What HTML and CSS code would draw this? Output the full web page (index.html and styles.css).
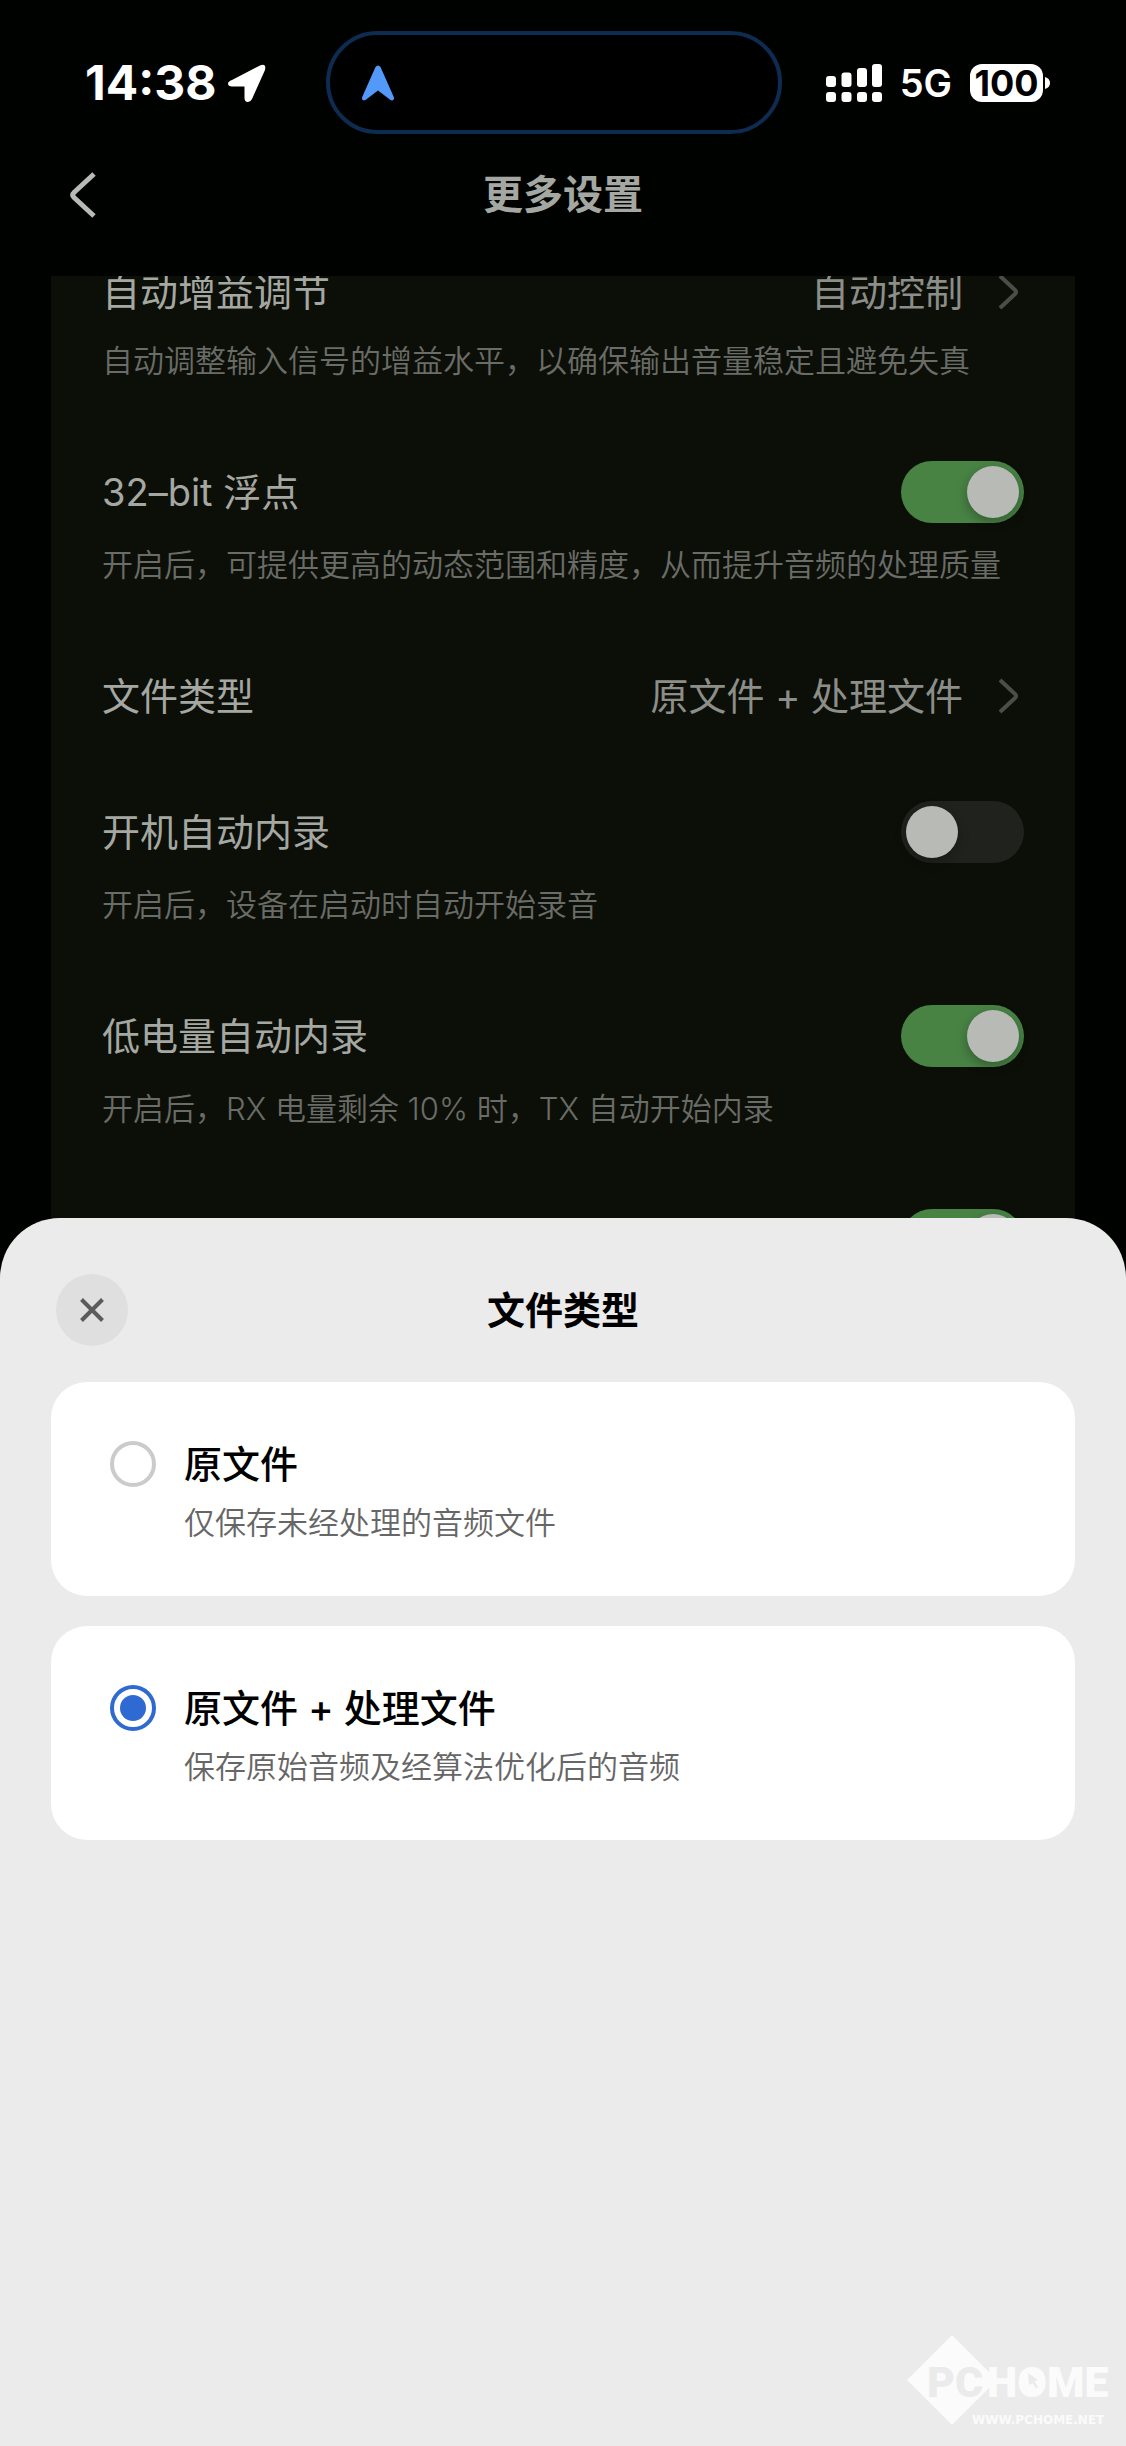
FILE: index.html
```html
<!DOCTYPE html>
<html lang="zh-CN">
<head>
    <meta charset="UTF-8">
    <meta name="viewport" content="width=device-width, initial-scale=1.0">
    <title>更多设置</title>
    <link rel="stylesheet" href="styles.css">
</head>
<body>
    <!-- Status bar -->
    <div class="status-bar">
        <span class="time">14:38</span>
        <svg class="location-icon" viewBox="0 0 38 38">
            <path d="M4 16 L32 1.500 Q38.500 -1 37 6 L24 35 Q22.500 38 20 38 Q16.500 38 16.500 34 L16.500 22.500 L4 22.500 Q0 22.500 0 19.500 Q0 17.500 4 16 Z"></path>
        </svg>
        <div class="island">
            <svg class="nav-icon" viewBox="0 0 32 36">
                <path d="M13.500 2 Q16 -1 18.500 2 L32 32.500 Q32 36.500 28.500 35 L16 25.500 L3.500 35 Q0 36.500 0 32.500 Z"></path>
            </svg>
        </div>
        <div class="status-right">
            <svg class="signal-icon" viewBox="0 0 56 38">
                <rect x="0" y="12" width="10" height="11" rx="3"></rect>
                <rect x="15.500" y="8.500" width="10" height="14.500" rx="3"></rect>
                <rect x="31" y="4" width="10" height="19" rx="3"></rect>
                <rect x="46" y="0" width="10" height="23" rx="3"></rect>
                <rect x="0" y="28" width="10" height="10" rx="3"></rect>
                <rect x="15.500" y="28" width="10" height="10" rx="3"></rect>
                <rect x="31" y="28" width="10" height="10" rx="3"></rect>
                <rect x="46" y="28" width="10" height="10" rx="3"></rect>
            </svg>
            <span class="network">5G</span>
            <div class="battery">
                <span class="battery-level">100</span>
                <svg class="battery-cap" viewBox="0 0 5 12">
                    <path d="M0 0 Q5 1.500 5 6 Q5 10.500 0 12 Z"></path>
                </svg>
            </div>
        </div>
    </div>

    <!-- Settings page -->
    <header class="navbar">
        <button class="back-btn" aria-label="返回">
            <svg viewBox="0 0 26 46">
                <path d="M24 2 L4 20.500 Q1.500 23 4 25.500 L24 44"></path>
            </svg>
        </button>
        <h1>更多设置</h1>
    </header>

    <main class="settings">
        <div class="settings-card">
            <div class="row">
                <button class="row-head">
                    <span class="row-label">自动增益调节</span>
                    <span class="row-value">自动控制</span>
                    <svg class="chevron" viewBox="0 0 28 36"><path d="M4 2 L19 16 Q21 18 19 20 L4 34"></path></svg>
                </button>
                <p class="row-desc">自动调整输入信号的增益水平，以确保输出音量稳定且避免失真</p>
            </div>
            <div class="row">
                <div class="row-head">
                    <label class="row-label" for="float">32–bit 浮点</label>
                    <input type="checkbox" class="switch" id="float" checked>
                </div>
                <p class="row-desc">开启后，可提供更高的动态范围和精度，从而提升音频的处理质量</p>
            </div>
            <div class="row">
                <button class="row-head">
                    <span class="row-label">文件类型</span>
                    <span class="row-value">原文件 + 处理文件</span>
                    <svg class="chevron" viewBox="0 0 28 36"><path d="M4 2 L19 16 Q21 18 19 20 L4 34"></path></svg>
                </button>
            </div>
            <div class="row">
                <div class="row-head">
                    <label class="row-label" for="boot-record">开机自动内录</label>
                    <input type="checkbox" class="switch" id="boot-record">
                </div>
                <p class="row-desc">开启后，设备在启动时自动开始录音</p>
            </div>
            <div class="row">
                <div class="row-head">
                    <label class="row-label" for="low-record">低电量自动内录</label>
                    <input type="checkbox" class="switch" id="low-record" checked>
                </div>
                <p class="row-desc">开启后，RX 电量剩余 10% 时，TX 自动开始内录</p>
            </div>
            <div class="row">
                <div class="row-head">
                    <input type="checkbox" class="switch" aria-label="开关" checked>
                </div>
            </div>
        </div>
    </main>

    <!-- File type sheet -->
    <section class="sheet">
        <div class="sheet-header">
            <button class="close-btn" aria-label="关闭">
                <svg viewBox="0 0 24 24"><path d="M1.500 1.500 L22.500 22.500 M22.500 1.500 L1.500 22.500"></path></svg>
            </button>
            <h2>文件类型</h2>
        </div>

        <div class="options">
            <label class="option" for="type-raw">
                <input type="radio" name="file-type" id="type-raw">
                <span class="option-text">
                    <span class="option-title">原文件</span>
                    <span class="option-desc">仅保存未经处理的音频文件</span>
                </span>
            </label>
            <label class="option" for="type-both">
                <input type="radio" name="file-type" id="type-both" checked>
                <span class="option-text">
                    <span class="option-title">原文件 + 处理文件</span>
                    <span class="option-desc">保存原始音频及经算法优化后的音频</span>
                </span>
            </label>
        </div>

        <svg class="watermark" viewBox="0 0 206 92">
            <path class="wm-light" d="M45 1 L90 46 L45 91 L0 46 Z"></path>
            <text class="wm-name wm-dark" x="20" y="63">PC</text>
            <text class="wm-name wm-light" x="80" y="63">HOME</text>
            <ellipse class="wm-light" cx="126" cy="47" rx="9" ry="13"></ellipse>
            <path class="wm-dark" d="M121 39 L131 46 L127.500 47.500 L131 53 L129 54.500 L125.500 49 L122 51 Z"></path>
            <text class="wm-url wm-light" x="65" y="90">WWW.PCHOME.NET</text>
        </svg>
    </section>
</body>
</html>
```
FILE: styles.css
```css
/* styles.css */
* {
    box-sizing: border-box;
}

body {
    display: flex;
    flex-direction: column;
    min-height: 100vh;
    margin: 0;
    font-family: Inter, 'Noto Sans CJK SC', sans-serif;
    background: #000200;
}

h1, h2, p {
    margin: 0;
}

button {
    padding: 0;
    border: none;
    background: none;
    font: inherit;
    cursor: pointer;
}

svg {
    display: block;
}

/* Status bar */
.status-bar {
    display: flex;
    align-items: center;
    padding: 31px 76px 0 85px;
    color: #fff;
}

.time {
    font-size: 48px;
    font-weight: 700;
    line-height: 56px;
}

.location-icon {
    width: 38px;
    height: 38px;
    margin-left: 12px;
    fill: #fff;
}

.island {
    display: flex;
    align-items: center;
    width: 456px;
    height: 103px;
    margin-left: 60px;
    padding-left: 32px;
    border: 4px solid #0e2c52;
    border-radius: 52px;
    background: #000;
}

.nav-icon {
    width: 32px;
    height: 36px;
    fill: #5299fa;
}

.status-right {
    display: flex;
    align-items: center;
    gap: 18px;
    margin-left: auto;
}

.signal-icon {
    width: 56px;
    height: 38px;
    fill: #fff;
}

.network {
    font-size: 38px;
    font-weight: 600;
    line-height: 40px;
}

.battery {
    display: flex;
    align-items: center;
    gap: 2px;
}

.battery-level {
    width: 73px;
    border-radius: 12px;
    background: #fff;
    color: #000;
    font-size: 36px;
    font-weight: 700;
    line-height: 38px;
    text-align: center;
}

.battery-cap {
    width: 5px;
    height: 12px;
    fill: #fff;
}

/* Page header */
.navbar {
    display: grid;
    grid-template-columns: 1fr auto 1fr;
    align-items: center;
    height: 142px;
    padding: 0 70px 20px;
}

.navbar h1 {
    color: #a5a8a2;
    font-size: 40px;
    font-weight: 700;
    line-height: 56px;
}

.back-btn {
    justify-self: start;
}

.back-btn svg {
    width: 26px;
    height: 46px;
    fill: none;
    stroke: #b8bab5;
    stroke-width: 5;
}

/* Settings list, scrolled a little under the header */
.settings {
    padding: 0 51px;
    overflow: hidden;
}

.settings-card {
    margin-top: -48px;
    background: #0c0f08;
}

.row {
    display: flex;
    flex-direction: column;
    justify-content: center;
    gap: 16px;
    min-height: 136px;
    padding: 37px 51px;
}

.row-head {
    display: flex;
    align-items: center;
    width: 100%;
    text-align: left;
}

.row-label {
    color: #a5a8a2;
    font-size: 38px;
    line-height: 54px;
}

.row-value {
    margin-left: auto;
    color: #8c8e89;
    font-size: 38px;
    line-height: 54px;
}

.chevron {
    width: 28px;
    height: 36px;
    margin-left: 33px;
    fill: none;
    stroke: #4b4d48;
    stroke-width: 4;
}

.row-desc {
    color: #6a6c67;
    font-size: 31px;
    font-weight: 350;
    line-height: 52px;
    white-space: nowrap;
}

.switch {
    appearance: none;
    width: 123px;
    height: 62px;
    margin: 0 0 0 auto;
    padding: 5px;
    border-radius: 31px;
    background: #20231d;
    cursor: pointer;
}

.switch::before {
    content: "";
    display: block;
    width: 52px;
    height: 52px;
    border-radius: 50%;
    background: #b8bab5;
    box-shadow: 0 4px 12px rgba(0, 0, 0, 0.3);
}

.switch:checked {
    background: #488344;
}

.switch:checked::before {
    margin-left: auto;
}

/* Bottom sheet, covers the end of the list */
.sheet {
    position: relative;
    display: flex;
    flex: 1;
    flex-direction: column;
    margin-top: -90px;
    padding: 56px 51px 20px;
    border-radius: 60px 60px 0 0;
    background: #ebebeb;
}

.sheet-header {
    display: grid;
    grid-template-columns: 1fr auto 1fr;
    align-items: center;
    margin-bottom: 36px;
    padding: 0 5px;
}

.sheet-header h2 {
    color: #000;
    font-size: 38px;
    font-weight: 700;
    line-height: 54px;
}

.close-btn {
    display: flex;
    align-items: center;
    justify-content: center;
    width: 72px;
    height: 72px;
    border-radius: 50%;
    background: #dfdfdf;
}

.close-btn svg {
    width: 24px;
    height: 24px;
    fill: none;
    stroke: #5b5b5b;
    stroke-width: 4;
}

.options {
    display: flex;
    flex-direction: column;
    gap: 30px;
}

.option {
    display: flex;
    align-items: flex-start;
    gap: 28px;
    padding: 55px 59px 47px;
    border-radius: 36px;
    background: #fff;
    cursor: pointer;
}

.option input {
    appearance: none;
    width: 46px;
    height: 46px;
    margin: 4px 0;
    padding: 6px;
    border: 4px solid #cbcbcb;
    border-radius: 50%;
}

.option input:checked {
    border-color: #2e6ad1;
    background: #2e6ad1 content-box;
}

.option-text {
    display: flex;
    flex-direction: column;
    gap: 6px;
}

.option-title {
    color: #000;
    font-size: 38px;
    font-weight: 500;
    line-height: 54px;
}

.option-desc {
    color: #666;
    font-size: 31px;
    font-weight: 350;
    line-height: 52px;
}

/* Watermark */
.watermark {
    width: 206px;
    height: 92px;
    margin: auto -38px 0 auto;
}

.wm-light {
    fill: #fbfbfb;
}

.wm-dark {
    fill: #ebebeb;
}

.wm-name {
    font-family: Roboto, 'Liberation Sans', sans-serif;
    font-size: 43px;
    font-weight: 900;
}

.wm-url {
    font-family: 'DejaVu Sans', sans-serif;
    font-size: 12px;
    font-weight: 700;
}
```
